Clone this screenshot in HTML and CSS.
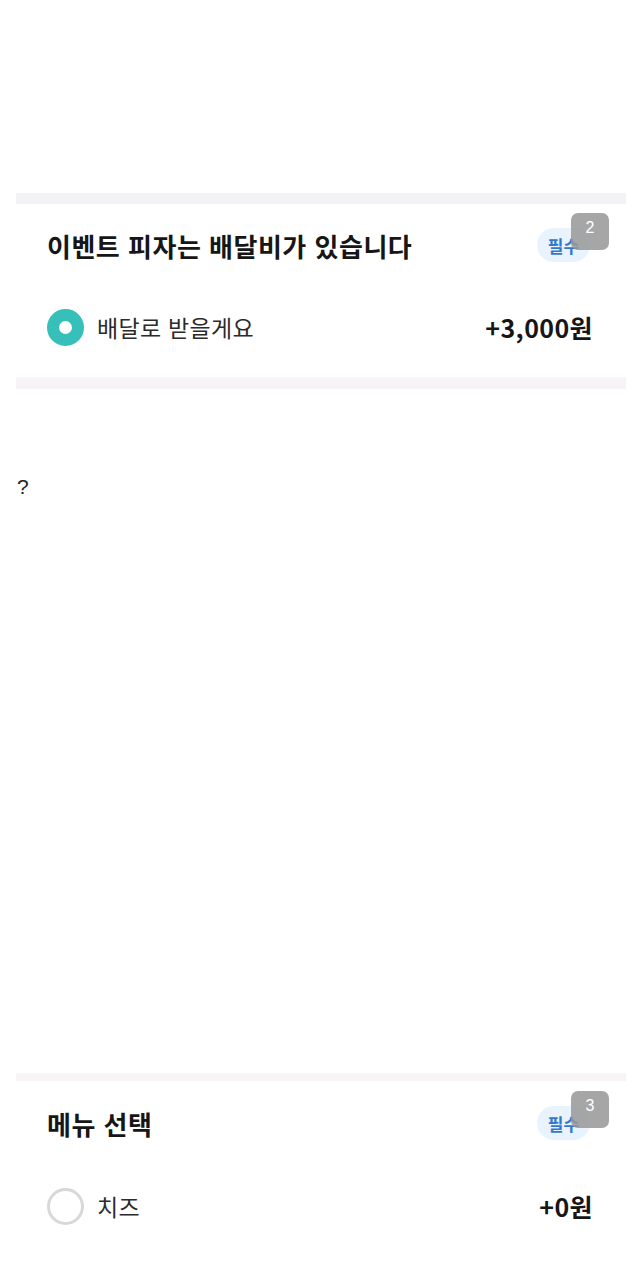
FILE: index.html
```html
<!DOCTYPE html>
<html lang="ko">
<head>
<meta charset="utf-8">
<link rel="stylesheet" href="styles.css">
</head>
<body>
<div class="page">
  <div class="top-space"></div>
  <section class="group">
    <div class="bar"></div>
    <div class="group-head">
      <h2 class="title">이벤트 피자는 배달비가 있습니다</h2>
      <span class="badge">필수<span class="marker">2</span></span>
    </div>
    <div class="option">
      <span class="radio checked"></span>
      <span class="label">배달로 받을게요</span>
      <span class="price">+3,000원</span>
    </div>
    <div class="bar bar-pink"></div>
  </section>
  <div class="broken">?</div>
  <section class="group">
    <div class="bar bar-thin"></div>
    <div class="group-head head-2">
      <h2 class="title">메뉴 선택</h2>
      <span class="badge">필수<span class="marker">3</span></span>
    </div>
    <div class="option">
      <span class="radio"></span>
      <span class="label">치즈</span>
      <span class="price">+0원</span>
    </div>
  </section>
</div>
</body>
</html>
```
FILE: styles.css
```css
html, body {
  margin: 0;
  padding: 0;
  background: #ffffff;
}
body {
  font-family: "Noto Sans CJK KR", "Noto Sans", sans-serif;
  color: #1d1d1f;
  width: 640px;
  height: 1280px;
  overflow: hidden;
}
.page {
  display: flex;
  flex-direction: column;
}
.top-space {
  height: 193px;
}
.group {
  display: flex;
  flex-direction: column;
  padding: 0 14px 0 16px;
}
.bar {
  height: 11px;
  background: #f3f3f6;
}
.bar-pink {
  margin-top: 9px;
  height: 12px;
  background: #f8f3f6;
}
.bar-thin {
  height: 8px;
  background: #f8f4f5;
}
.group-head {
  height: 82px;
  display: flex;
  align-items: center;
  justify-content: space-between;
  padding: 0 36px 0 31px;
}
.head-2 {
  height: 84px;
}
.title {
  margin: 0;
  font-size: 26px;
  font-weight: 700;
  letter-spacing: 0.5px;
  color: #161616;
}
.badge {
  position: relative;
  display: inline-flex;
  align-items: center;
  justify-content: center;
  width: 53px;
  height: 34px;
  border-radius: 17px;
  background: #e8f3fd;
  color: #3278cc;
  font-size: 17px;
  font-weight: 700;
}
.marker {
  position: absolute;
  top: -15px;
  left: 34px;
  width: 38px;
  height: 37px;
  border-radius: 7px;
  background: rgba(150, 150, 150, 0.85);
  color: #ffffff;
  font-family: "Liberation Sans", sans-serif;
  font-weight: 400;
  font-size: 16px;
  display: flex;
  justify-content: center;
  padding-top: 6px;
  box-sizing: border-box;
}
.option {
  height: 82px;
  display: flex;
  align-items: center;
  padding: 0 33px 0 31px;
}
.radio {
  width: 37px;
  height: 37px;
  border-radius: 50%;
  box-sizing: border-box;
  border: 3px solid #d8d8d8;
  flex-shrink: 0;
}
.radio.checked {
  border: 12px solid #36c0b9;
  background: #ffffff;
}
.label {
  margin-left: 13px;
  font-size: 23px;
  letter-spacing: 0.3px;
  color: #2b2b2b;
  flex: 1;
}
.price {
  font-size: 25px;
  font-weight: 700;
  letter-spacing: 0.4px;
  color: #161616;
}
.broken {
  height: 684px;
  padding: 86px 0 0 17px;
  box-sizing: border-box;
  font-family: "Liberation Sans", sans-serif;
  font-size: 21px;
  color: #222;
}
```
